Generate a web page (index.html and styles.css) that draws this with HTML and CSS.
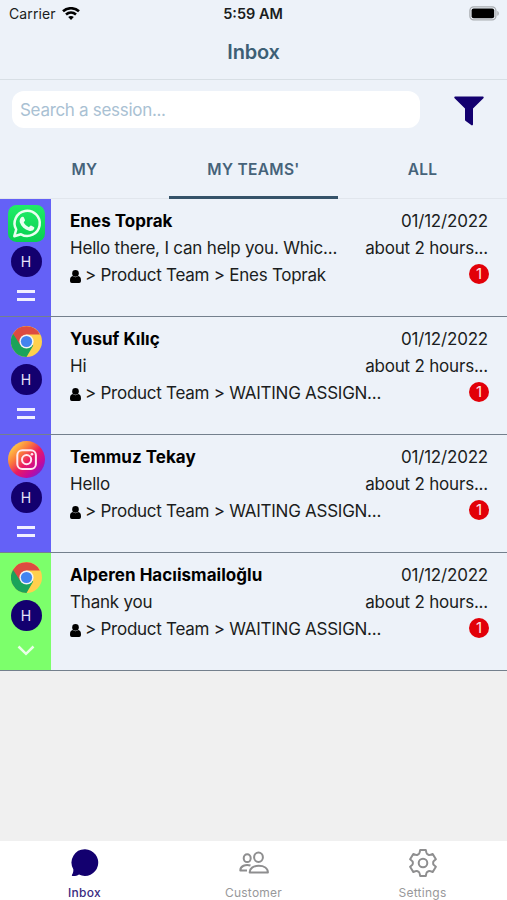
FILE: index.html
```html
<!DOCTYPE html>
<html lang="en">
<head>
    <meta charset="UTF-8">
    <meta name="viewport" content="width=device-width, initial-scale=1.0">
    <title>Inbox</title>
    <link rel="stylesheet" href="styles.css">
</head>
<body>
    <!-- Shared icons -->
    <svg class="defs" width="0" height="0">
        <defs>
            <linearGradient id="waGreen" x1="0" y1="0" x2="0" y2="1">
                <stop offset="0" stop-color="#20ed68"/>
                <stop offset="1" stop-color="#08cf50"/>
            </linearGradient>
            <linearGradient id="igGradient" x1="0.1" y1="0.1" x2="0.9" y2="0.9">
                <stop offset="0" stop-color="#ffd54a"/>
                <stop offset="0.3" stop-color="#fb7a3c"/>
                <stop offset="0.55" stop-color="#ea1b62"/>
                <stop offset="0.8" stop-color="#c40a9c"/>
                <stop offset="1" stop-color="#7a1fd0"/>
            </linearGradient>
            <symbol id="chrome" viewBox="0 0 48 48">
                <circle cx="24" cy="24" r="24" fill="#ffd04d"/>
                <path d="M24 24 L3.2 12 A24 24 0 0 0 24 48 L34.4 30 Z" fill="#1aa35a"/>
                <path d="M24 13 H44.8 A24 24 0 0 0 3.2 12 L14.5 29.500 Z" fill="#dd4b41"/>
                <circle cx="24" cy="24" r="11" fill="#f4f4f4"/>
                <circle cx="24" cy="24" r="8.700" fill="#4284f0"/>
            </symbol>
            <symbol id="person" viewBox="0 0 11 13">
                <circle cx="5.500" cy="3.400" r="3.300"/>
                <path d="M0 10.500 C0 7.600 1 6.400 2.800 6.100 C4.500 7.500 6.500 7.500 8.200 6.100 C10 6.400 11 7.600 11 10.500 C11 12.200 10.300 13 9.200 13 H1.800 C0.700 13 0 12.200 0 10.500 Z"/>
            </symbol>
        </defs>
    </svg>

    <div class="app">
        <!-- Status bar -->
        <div class="status">
            <div class="carrier">
                <span>Carrier</span>
                <svg width="18" height="14" viewBox="0 0 18 14" fill="none" stroke="#000" stroke-width="2.600">
                    <path d="M1 4.300 C5.500 0.200 12.500 0.200 17 4.300"/>
                    <path d="M4 7.500 C7 4.900 11 4.900 14 7.500"/>
                    <path d="M6.200 10 C7.800 8.600 10.200 8.600 11.800 10 L9 13 Z" fill="#000" stroke="none"/>
                </svg>
            </div>
            <span class="clock">5:59 AM</span>
            <svg class="battery" width="31" height="15" viewBox="0 0 31 15">
                <rect x="0.900" y="0.900" width="26" height="13" rx="3.800" fill="none" stroke="#a9adb1" stroke-width="1.300"/>
                <rect x="2.600" y="2.600" width="22.600" height="9.600" rx="2" fill="#000"/>
                <path d="M28.300 5 C30.300 5.600 30.300 9.200 28.300 9.800 Z" fill="#a9adb1"/>
            </svg>
        </div>

        <h1 class="title">Inbox</h1>

        <!-- Search -->
        <div class="search-row">
            <input class="search" type="text" placeholder="Search a session...">
            <svg class="filter" width="30" height="30" viewBox="0 0 30 30">
                <path d="M1.200 0.600 H28.800 C29.800 0.600 30 1.500 29.400 2.200 L19 12.500 V28.300 C19 29.300 18 29.700 17.200 29.100 L11.700 25 C11.200 24.600 11 24.300 11 23.700 V12.500 L0.600 2.200 C0 1.500 0.200 0.600 1.200 0.600 Z"/>
            </svg>
        </div>

        <div class="tabs">
            <div class="tab">MY</div>
            <div class="tab active">MY TEAMS'</div>
            <div class="tab">ALL</div>
        </div>

        <!-- Sessions -->
        <div class="list">
            <div class="session">
                <div class="side">
                    <div class="channel">
                        <svg width="37" height="37" viewBox="0 0 37 37">
                            <rect width="37" height="37" rx="8.500" fill="url(#waGreen)"/>
                            <path d="M6.300 31.200 L8.200 24.500 A12.600 12.600 0 1 1 13 29.300 Z" fill="none" stroke="#e9fff0" stroke-width="2.500" stroke-linejoin="round"/>
                            <path d="M14.500 11.700 C15.200 11.500 15.600 11.700 15.900 12.400 L17 15 C17.300 15.900 16 16.800 15.700 17.300 C16.800 19.700 18.700 21.300 21 22.200 C21.700 21.600 22.400 20.300 23.100 20.600 L25.800 21.900 C26.500 22.200 26.400 23 26.100 23.800 C25.400 25.600 23 26.400 21 25.800 C16.500 24.500 13.500 21.500 12 17.800 C11.100 15.300 12.300 12.300 14.500 11.700 Z" fill="#e9fff0"/>
                        </svg>
                    </div>
                    <div class="avatar">H</div>
                    <div class="bars"></div>
                </div>
                <div class="info">
                    <div class="line"><b class="name">Enes Toprak</b><span class="date">01/12/2022</span></div>
                    <div class="line"><span class="message">Hello there, I can help you. Whic...</span><span class="ago">about 2 hours...</span></div>
                    <div class="line"><span class="path"><svg width="11" height="13"><use href="#person"/></svg>&gt; Product Team &gt; Enes Toprak</span><span class="badge">1</span></div>
                </div>
            </div>

            <div class="session">
                <div class="side">
                    <div class="channel"><svg width="31" height="31"><use href="#chrome"/></svg></div>
                    <div class="avatar">H</div>
                    <div class="bars"></div>
                </div>
                <div class="info">
                    <div class="line"><b class="name">Yusuf Kılıç</b><span class="date">01/12/2022</span></div>
                    <div class="line"><span class="message">Hi</span><span class="ago">about 2 hours...</span></div>
                    <div class="line"><span class="path"><svg width="11" height="13"><use href="#person"/></svg>&gt; Product Team &gt; WAITING ASSIGN...</span><span class="badge">1</span></div>
                </div>
            </div>

            <div class="session">
                <div class="side">
                    <div class="channel">
                        <svg width="37" height="37" viewBox="0 0 37 37">
                            <circle cx="18.500" cy="18.500" r="18.500" fill="url(#igGradient)"/>
                            <g fill="none" stroke="#ffeaf2" stroke-width="2">
                                <rect x="9.300" y="9.300" width="18.600" height="18.600" rx="5"/>
                                <circle cx="18.600" cy="18.600" r="4.600"/>
                            </g>
                            <circle cx="24" cy="13.300" r="1.300" fill="#ffeaf2"/>
                        </svg>
                    </div>
                    <div class="avatar">H</div>
                    <div class="bars"></div>
                </div>
                <div class="info">
                    <div class="line"><b class="name">Temmuz Tekay</b><span class="date">01/12/2022</span></div>
                    <div class="line"><span class="message">Hello</span><span class="ago">about 2 hours...</span></div>
                    <div class="line"><span class="path"><svg width="11" height="13"><use href="#person"/></svg>&gt; Product Team &gt; WAITING ASSIGN...</span><span class="badge">1</span></div>
                </div>
            </div>

            <div class="session">
                <div class="side low">
                    <div class="channel"><svg width="31" height="31"><use href="#chrome"/></svg></div>
                    <div class="avatar">H</div>
                    <svg class="chevron" width="18" height="11" viewBox="0 0 18 11"><path d="M1.500 1.500 L9 8.800 L16.500 1.500"/></svg>
                </div>
                <div class="info">
                    <div class="line"><b class="name">Alperen Hacıismailoğlu</b><span class="date">01/12/2022</span></div>
                    <div class="line"><span class="message">Thank you</span><span class="ago">about 2 hours...</span></div>
                    <div class="line"><span class="path"><svg width="11" height="13"><use href="#person"/></svg>&gt; Product Team &gt; WAITING ASSIGN...</span><span class="badge">1</span></div>
                </div>
            </div>
        </div>

        <!-- Bottom navigation -->
        <div class="nav">
            <div class="nav-item selected">
                <svg width="30" height="30" viewBox="0 0 30 30">
                    <path d="M15.200 1.300 A13.300 13.300 0 1 1 9 26.500 C7 27.800 4.500 28.300 2.400 28 C1.800 27.900 1.700 27.300 2 26.800 C3.100 25 3.500 23.500 3.300 21.200 A13.300 13.300 0 0 1 15.200 1.300 Z"/>
                </svg>
                <span>Inbox</span>
            </div>
            <div class="nav-item">
                <svg width="30" height="30" viewBox="0 0 30 30" fill="none" stroke="#8e8e8f" stroke-width="2" stroke-linejoin="round">
                    <ellipse cx="8.200" cy="10.200" rx="3.500" ry="3.900"/>
                    <ellipse cx="19.500" cy="9.200" rx="4.400" ry="4.800"/>
                    <path d="M11.500 17.500 C6.500 15.800 1.300 18.200 1.300 22.500 H8"/>
                    <path d="M10.700 24.500 C10.500 20.300 14.300 17.800 19.700 17.800 C25 17.800 28.900 20.300 28.900 24.500 Z"/>
                </svg>
                <span>Customer</span>
            </div>
            <div class="nav-item">
                <svg width="30" height="30" viewBox="0 0 30 30" fill="none" stroke="#8e8e8f" stroke-width="2" stroke-linejoin="round">
                    <path d="M12.200 2 H17.800 Q18.500 5.500 19 5.800 L20.600 6.800 Q21.500 7.300 24.700 6 L27.900 11.300 Q25.200 13.400 25.200 14 V16 Q25.200 16.600 27.900 18.700 L24.700 24 Q21.500 22.700 20.600 23.200 L19 24.200 Q18.500 24.500 17.800 28 H12.200 Q11.500 24.500 11 24.200 L9.400 23.200 Q8.500 22.700 5.300 24 L2.100 18.700 Q4.800 16.600 4.800 16 V14 Q4.800 13.400 2.100 11.300 L5.300 6 Q8.500 7.300 9.400 6.800 L11 5.800 Q11.500 5.500 12.200 2 Z"/>
                    <circle cx="15" cy="15" r="4.300"/>
                </svg>
                <span>Settings</span>
            </div>
        </div>
    </div>
</body>
</html>
```

FILE: styles.css
```css
* {
    box-sizing: border-box;
}
body {
    margin: 0;
    background-color: #f0f0f0;
    font-family: Inter, "Liberation Sans", sans-serif;
    color: #1b1d20;
}
.defs {
    display: block;
}
.app {
    height: 900px;
    display: flex;
    flex-direction: column;
}
.status {
    display: grid;
    grid-template-columns: 1fr auto 1fr;
    align-items: center;
    height: 27px;
    padding: 0 7px 0 9px;
    background: #edf2f9;
    font-size: 14px;
}
.carrier {
    display: flex;
    align-items: center;
    gap: 6px;
    letter-spacing: 0.1px;
}
.clock {
    margin-right: 3px;
    font-weight: 600;
    font-size: 14.5px;
}
.battery {
    justify-self: end;
}
.title {
    margin: 0;
    height: 53px;
    line-height: 50px;
    text-align: center;
    font-size: 20px;
    font-weight: 600;
    letter-spacing: -0.2px;
    color: #3d5f75;
    background: #edf2f9;
    border-bottom: 1px solid #d8dfe5;
}
.search-row {
    display: flex;
    align-items: center;
    justify-content: space-between;
    height: 61px;
    padding: 0 23px 2px 12px;
    background: #edf2f9;
}
.search {
    width: 408px;
    height: 37px;
    border: none;
    border-radius: 12px;
    padding: 1px 8px 0;
    background: #fff;
    font-family: inherit;
    font-size: 17px;
    letter-spacing: -0.3px;
}
.search::placeholder {
    color: #a9c1d3;
}
.filter {
    margin-top: 3px;
    fill: #13006f;
}
.tabs {
    display: grid;
    grid-template-columns: repeat(3, 1fr);
    height: 58px;
    background: #edf2f9;
    border-bottom: 1px solid #e1e6ed;
}
.tab {
    height: 58px;
    line-height: 58px;
    text-align: center;
    font-size: 15.5px;
    font-weight: 600;
    letter-spacing: 0.3px;
    color: #46637a;
}
.tab.active {
    border-bottom: 3px solid #35536a;
}
.list {
    flex: 1;
}
.session {
    display: flex;
    height: 118px;
    background: #edf2f9;
    border-bottom: 1px solid #74808d;
}
.side {
    width: 51px;
    display: flex;
    flex-direction: column;
    align-items: center;
    padding: 6px 0 0 1px;
    background: #6461f7;
}
.side.low {
    background: #7cff6b;
}
.channel {
    height: 37px;
    display: flex;
    align-items: center;
}
.avatar {
    width: 31px;
    height: 31px;
    margin-top: 4px;
    border-radius: 50%;
    background: #13006f;
    color: #e6e2fa;
    font-size: 14px;
    line-height: 31px;
    text-align: center;
}
.bars {
    width: 18px;
    height: 11px;
    margin-top: 13px;
    border-top: 3px solid #f0efff;
    border-bottom: 3px solid #f0efff;
}
.chevron {
    margin-top: 14px;
    fill: none;
    stroke: #e9ffe6;
    stroke-width: 2.5;
}
.info {
    flex: 1;
    padding: 8.5px 19px 0 19px;
}
.line {
    display: flex;
    justify-content: space-between;
    align-items: center;
    height: 27px;
    font-size: 17px;
    letter-spacing: -0.2px;
    white-space: nowrap;
}
.name {
    color: #000;
    letter-spacing: 0.03px;
}
.path {
    display: flex;
    align-items: center;
    gap: 4px;
    letter-spacing: -0.26px;
}
.path svg {
    margin-top: 2px;
    fill: #000;
}
.badge {
    width: 20px;
    height: 20px;
    margin: 0 -1px 3px 0;
    border-radius: 50%;
    background: #e20008;
    color: #ffe3e3;
    font-size: 15px;
    line-height: 20px;
    text-align: center;
}
.nav {
    display: grid;
    grid-template-columns: repeat(3, 1fr);
    height: 59px;
    background: #fff;
}
.nav-item {
    display: flex;
    flex-direction: column;
    align-items: center;
    padding-top: 7px;
    gap: 7px;
    font-size: 12px;
    line-height: 15px;
    letter-spacing: 0.25px;
    color: #98989a;
}
.nav-item.selected {
    color: #3a2a80;
    fill: #13006f;
    font-weight: 500;
}
```
